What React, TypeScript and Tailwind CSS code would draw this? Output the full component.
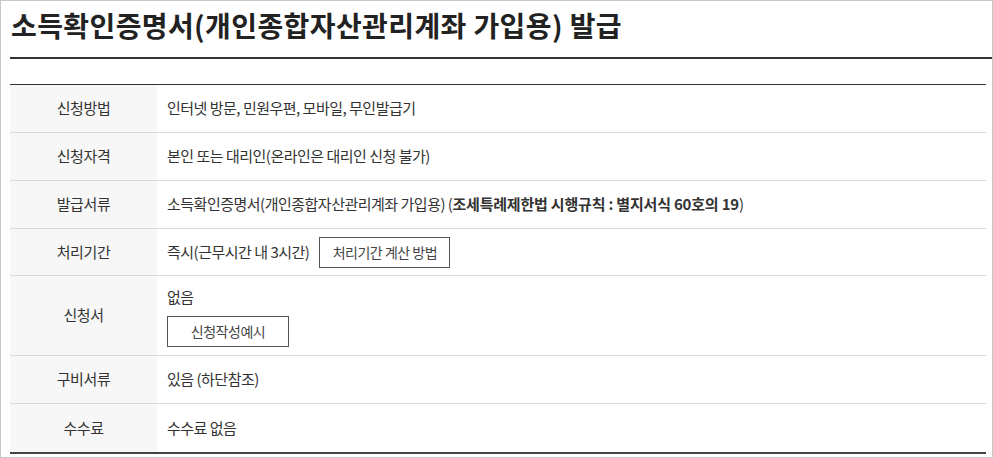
import React from 'react';

const rows: { label: string; h: string; content: React.ReactNode }[] = [
  { label: '신청방법', h: 'h-[47px]', content: '인터넷 방문, 민원우편, 모바일, 무인발급기' },
  { label: '신청자격', h: 'h-[48px]', content: '본인 또는 대리인(온라인은 대리인 신청 불가)' },
  {
    label: '발급서류',
    h: 'h-[48px]',
    content: (
      <span>
        소득확인증명서(개인종합자산관리계좌 가입용) (
        <b className="font-bold tracking-[-0.2px]">조세특례제한법 시행규칙 : 별지서식 60호의 19</b>)
      </span>
    ),
  },
  {
    label: '처리기간',
    h: 'h-[47px]',
    content: (
      <div className="flex items-center gap-[10px]">
        <span>즉시(근무시간 내 3시간)</span>
        <button className="h-[31px] w-[131px] border border-[#555] bg-white text-[14px] text-[#444] tracking-[-0.5px]">
          처리기간 계산 방법
        </button>
      </div>
    ),
  },
  {
    label: '신청서',
    h: 'h-[80px]',
    content: (
      <div className="flex flex-col items-start gap-[8px] pt-[2px]">
        <span>없음</span>
        <button className="h-[31px] w-[122px] border border-[#555] bg-white text-[14px] text-[#444] tracking-[-0.5px]">
          신청작성예시
        </button>
      </div>
    ),
  },
  { label: '구비서류', h: 'h-[48px]', content: '있음 (하단참조)' },
  { label: '수수료', h: 'h-[49px]', content: '수수료 없음' },
];

export default function App() {
  return (
    <div
      className="w-[993px] h-[458px] border border-[#c8c8c8] bg-white pl-[9px] overflow-hidden"
      style={{ fontFamily: '"Noto Sans CJK KR", "Noto Sans", sans-serif' }}
    >
      <h1 className="h-[58px] flex items-center pb-[8px] pl-[1px] text-[28px] font-bold text-[#222] tracking-[0.4px] border-b-2 border-[#333]">
        소득확인증명서(개인종합자산관리계좌 가입용) 발급
      </h1>
      <div className="mt-[25px] mr-[6px] border-t border-[#333] border-b-2 border-b-[#444]">
        {rows.map((r, i) => (
          <div key={r.label} className={`flex ${r.h} ${i > 0 ? 'border-t border-[#d8d8d8]' : ''}`}>
            <div className="w-[147px] shrink-0 bg-[#f7f7f7] flex items-center justify-center text-[15px] text-[#333] tracking-[-0.4px]">
              {r.label}
            </div>
            <div className="flex-1 flex items-center pl-[10px] text-[15px] text-[#333] tracking-[-0.5px]">
              {r.content}
            </div>
          </div>
        ))}
      </div>
    </div>
  );
}
